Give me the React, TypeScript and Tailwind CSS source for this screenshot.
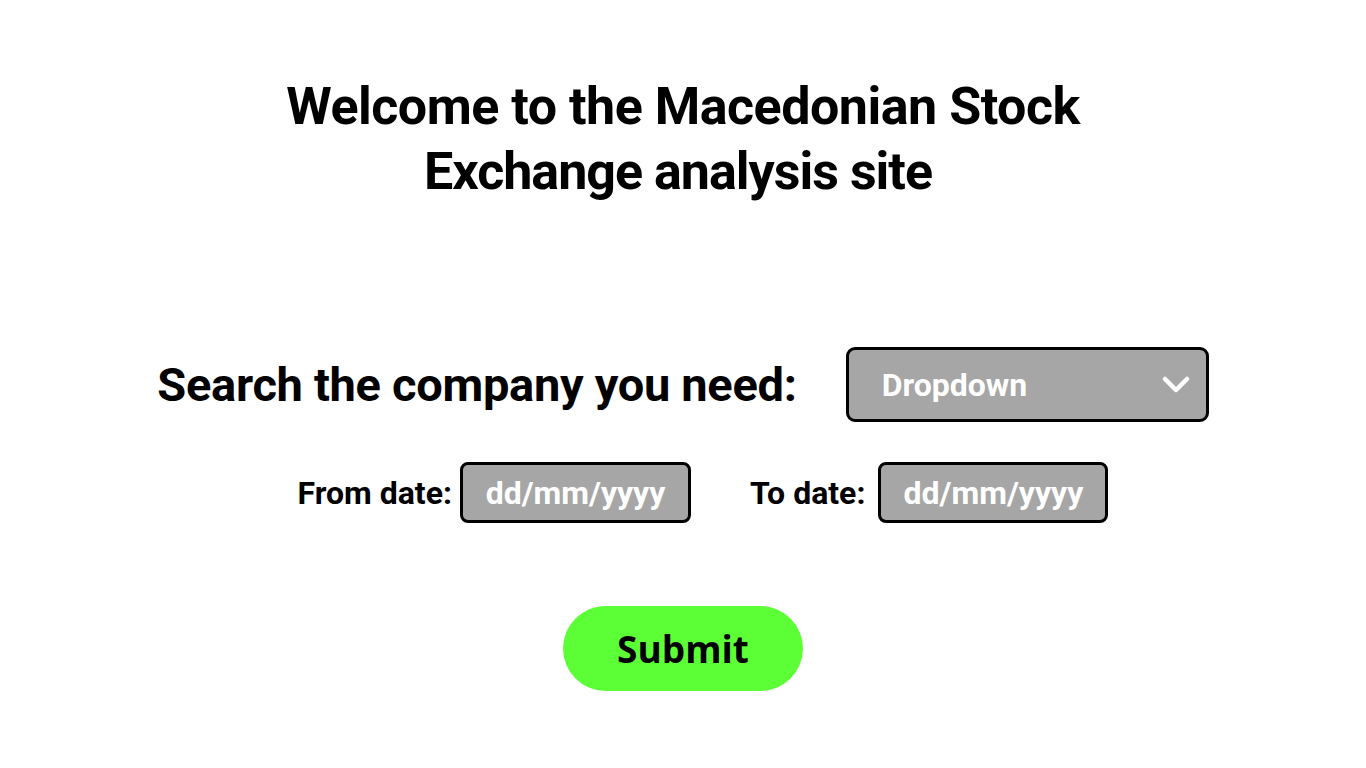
import React from "react";

function Chevron() {
  return (
    <svg width="28" height="18" viewBox="0 0 28 18" fill="none">
      <path d="M3 3 L14 14 L25 3" stroke="white" strokeWidth="4.5" strokeLinecap="round" strokeLinejoin="round" />
    </svg>
  );
}

export default function App() {
  return (
    <div className="w-[1366px] h-[768px] bg-white flex flex-col items-center overflow-hidden" style={{ fontFamily: "Roboto, 'Liberation Sans', sans-serif" }}>
      <h1 className="mt-[74px] flex flex-col items-center text-center text-[52px] leading-[65px] font-bold text-black">
        <span className="tracking-[-0.5px]">Welcome to the Macedonian Stock</span>
        <span className="tracking-[-1px] pr-[10px]">Exchange analysis site</span>
      </h1>

      <div className="mt-[143px] flex items-center justify-center gap-[49px]">
        <span className="text-[47px] leading-[60px] font-bold text-black tracking-[-0.3px]">Search the company you need:</span>
        <div className="w-[363px] h-[75px] rounded-[9px] border-[3px] border-black bg-[#a6a6a6] flex items-center justify-between pl-[33px] pr-[16px]">
          <span className="text-[32px] font-bold text-white">Dropdown</span>
          <Chevron />
        </div>
      </div>

      <div className="mt-[40px] flex items-center justify-center pl-[40px]">
        <span className="text-[32px] font-bold text-black mr-[8px]">From date:</span>
        <div className="w-[231px] h-[61px] rounded-[8px] border-[3px] border-black bg-[#a6a6a6] flex items-center justify-center">
          <span className="text-[32px] font-bold text-white">dd/mm/yyyy</span>
        </div>
        <span className="text-[32px] font-bold text-black ml-[59px] mr-[13px]">To date:</span>
        <div className="w-[230px] h-[61px] rounded-[8px] border-[3px] border-black bg-[#a6a6a6] flex items-center justify-center">
          <span className="text-[32px] font-bold text-white">dd/mm/yyyy</span>
        </div>
      </div>

      <button className="mt-[83px] w-[240px] h-[85px] rounded-full bg-[#5cff36] flex items-center justify-center">
        <span className="text-[37px] font-bold text-black" style={{ fontFamily: "'Open Sans', sans-serif" }}>Submit</span>
      </button>
    </div>
  );
}
